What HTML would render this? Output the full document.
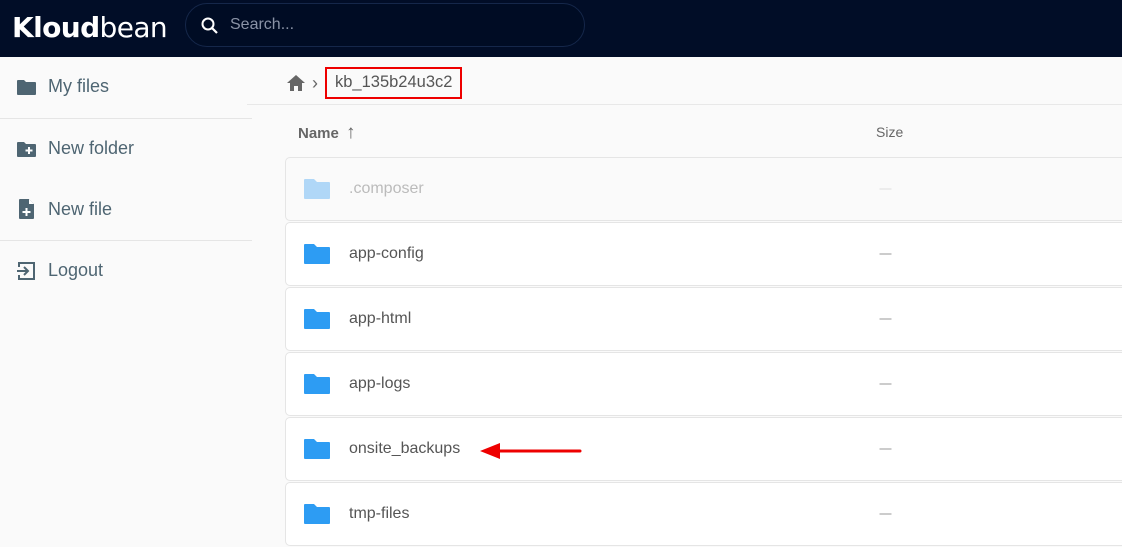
<!DOCTYPE html>
<html><head><style>
*{margin:0;padding:0;box-sizing:border-box}
body{width:1122px;height:547px;overflow:hidden;background:#fafafa;font-family:"Liberation Sans",sans-serif;position:relative}
.hdr{position:absolute;left:0;top:0;width:1122px;height:57px;background:#010d27}
.logo{position:absolute;left:12px;top:11px;color:#fff;font-size:28px;letter-spacing:-0.6px;font-family:"DejaVu Sans","Liberation Sans",sans-serif}
.logo b{font-weight:bold}
.search{position:absolute;left:185px;top:3px;width:400px;height:44px;border:1px solid #15274a;border-radius:22px;background:#000c24}
.search span{position:absolute;left:44px;top:12px;color:#8a93a6;font-size:16px}
.side{position:absolute;left:0;top:57px;width:252px;height:490px}
.item{position:absolute;left:16px;font-size:18px;color:#4e6572;display:flex;align-items:center}
.item svg{margin-right:11px}
.hr{position:absolute;left:0;width:252px;height:1px;background:#e5e5e5}
.bc{position:absolute;left:286px;top:67px;display:flex;align-items:center;color:#555;font-size:16.5px}
.box{border:2px solid #e00;padding:4px 8px;margin-left:7px;height:32px}
.line{position:absolute;left:247px;top:104px;width:875px;height:1px;background:#e8e8e8}
.th{position:absolute;top:122px;font-size:15px;color:#666}
.row{position:absolute;left:285px;width:850px;height:64px;background:#fff;border:1px solid #e5e5e5;border-radius:5px}
.row svg{position:absolute;left:17px;top:20px}
.row .n{position:absolute;left:63px;top:22px;font-size:16px;color:#555}
.row .d{position:absolute;left:592px;top:22px;font-size:15px;color:#999;transform:scaleX(0.8)}
</style></head><body>
<div class="hdr">
<div class="logo"><b>Kloud</b>bean</div>
<div class="search"><svg style="position:absolute;left:14px;top:12px" width="20" height="20" viewBox="0 0 20 20"><circle cx="8" cy="8" r="5.5" fill="none" stroke="#fff" stroke-width="2"/><path d="M12 12l5 5" stroke="#fff" stroke-width="2.2"/></svg><span>Search...</span></div>
</div>
<div class="side">
<div class="item" style="top:19px"><svg width="21" height="18" viewBox="0 0 21 18"><path d="M2 2h6l2 2h9a1 1 0 0 1 1 1v11a1 1 0 0 1-1 1H2a1 1 0 0 1-1-1V3a1 1 0 0 1 1-1z" fill="#4e6572"/></svg>My files</div>
<div class="hr" style="top:61px"></div>
<div class="item" style="top:81px"><svg width="21" height="18" viewBox="0 0 21 18"><path d="M2 2h6l2 2h9a1 1 0 0 1 1 1v11a1 1 0 0 1-1 1H2a1 1 0 0 1-1-1V3a1 1 0 0 1 1-1z" fill="#4e6572"/><path d="M13 7v7M9.5 10.5h7" stroke="#fff" stroke-width="2"/></svg>New folder</div>
<div class="item" style="top:141px"><svg width="21" height="22" viewBox="0 0 21 22"><path d="M4 1h9l5 5v14a1 1 0 0 1-1 1H4a1 1 0 0 1-1-1V2a1 1 0 0 1 1-1z" fill="#4e6572"/><path d="M13 1v5h5" fill="#fff"/><path d="M10.5 10v8M6.5 14h8" stroke="#fff" stroke-width="2"/></svg>New file</div>
<div class="hr" style="top:183px"></div>
<div class="item" style="top:203px"><svg width="21" height="20" viewBox="0 0 21 20"><path d="M3 6V2h15v16H3v-4" fill="none" stroke="#4e6572" stroke-width="2"/><path d="M1 10h11M8 6l4 4-4 4" fill="none" stroke="#4e6572" stroke-width="2"/></svg>Logout</div>
</div>
<div class="bc"><svg width="20" height="18" viewBox="0 0 20 18"><path d="M10 1L1 9h3v8h4v-5h4v5h4V9h3z" fill="#666"/></svg><span style="margin-left:6px;font-size:18px;color:#666">›</span><span class="box">kb_135b24u3c2</span></div>
<div class="line"></div>
<div class="th" style="left:298px;font-weight:bold">Name <span style="font-weight:normal;font-size:19px;margin-left:3px">↑</span></div>
<div class="th" style="left:876px;font-size:14px;top:124px">Size</div>
<div class="row" style="top:157px;background:#fafafa"><svg width="28" height="22" viewBox="0 0 28 22"><path d="M2 1h9l3 3h12a1 1 0 0 1 1 1v15a1 1 0 0 1-1 1H2a1 1 0 0 1-1-1V2a1 1 0 0 1 1-1z" fill="#b0d7f7"/></svg><span class="n" style="color:#bbb">.composer</span><span class="d" style="color:#ddd">—</span></div>
<div class="row" style="top:222px"><svg width="28" height="22" viewBox="0 0 28 22"><path d="M2 1h9l3 3h12a1 1 0 0 1 1 1v15a1 1 0 0 1-1 1H2a1 1 0 0 1-1-1V2a1 1 0 0 1 1-1z" fill="#2d9cf3"/></svg><span class="n">app-config</span><span class="d">—</span></div>
<div class="row" style="top:287px"><svg width="28" height="22" viewBox="0 0 28 22"><path d="M2 1h9l3 3h12a1 1 0 0 1 1 1v15a1 1 0 0 1-1 1H2a1 1 0 0 1-1-1V2a1 1 0 0 1 1-1z" fill="#2d9cf3"/></svg><span class="n">app-html</span><span class="d">—</span></div>
<div class="row" style="top:352px"><svg width="28" height="22" viewBox="0 0 28 22"><path d="M2 1h9l3 3h12a1 1 0 0 1 1 1v15a1 1 0 0 1-1 1H2a1 1 0 0 1-1-1V2a1 1 0 0 1 1-1z" fill="#2d9cf3"/></svg><span class="n">app-logs</span><span class="d">—</span></div>
<div class="row" style="top:417px"><svg width="28" height="22" viewBox="0 0 28 22"><path d="M2 1h9l3 3h12a1 1 0 0 1 1 1v15a1 1 0 0 1-1 1H2a1 1 0 0 1-1-1V2a1 1 0 0 1 1-1z" fill="#2d9cf3"/></svg><span class="n">onsite_backups</span><span class="d">—</span></div>
<div class="row" style="top:482px"><svg width="28" height="22" viewBox="0 0 28 22"><path d="M2 1h9l3 3h12a1 1 0 0 1 1 1v15a1 1 0 0 1-1 1H2a1 1 0 0 1-1-1V2a1 1 0 0 1 1-1z" fill="#2d9cf3"/></svg><span class="n">tmp-files</span><span class="d">—</span></div>
<svg style="position:absolute;left:478px;top:442px" width="104" height="18" viewBox="0 0 104 18"><path d="M102 9H18" stroke="#e00" stroke-width="3" stroke-linecap="round"/><path d="M2 9l20-8v16z" fill="#e00"/></svg>
</body></html>
